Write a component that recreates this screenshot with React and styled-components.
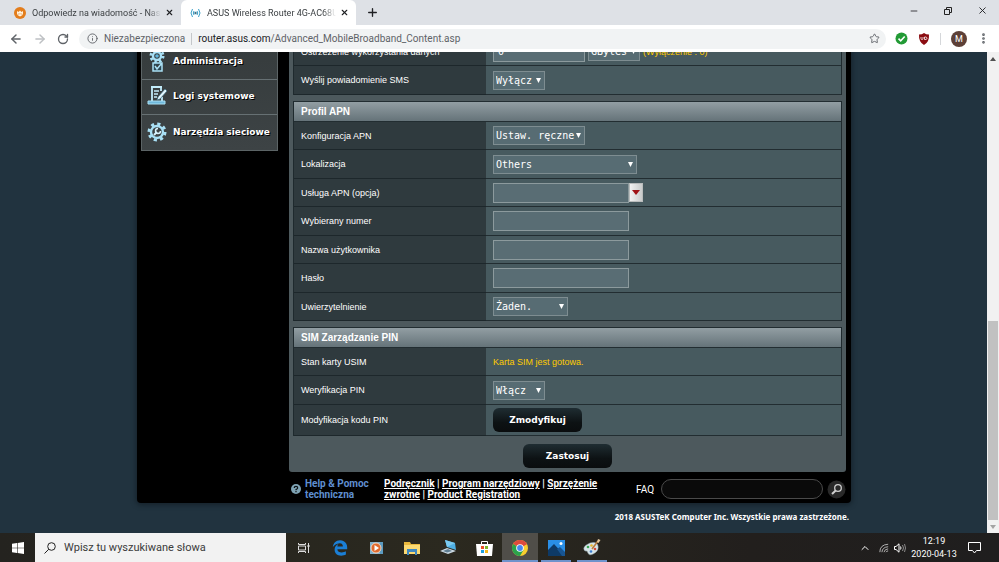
import React from "react";
import styled, { createGlobalStyle } from "styled-components";
import {
  ArrowLeft,
  ArrowRight,
  RotateCw,
  Info,
  Star,
  X,
  Plus,
  Minus,
  ChevronUp,
  EllipsisVertical
} from "lucide-react";
import { FaEdgeLegacy } from "react-icons/fa";

const uiFont = `Roboto, "Noto Sans", sans-serif`;
const pageFont = `"Liberation Sans", Arial, sans-serif`;
const boldFont = `"DejaVu Sans", Verdana, sans-serif`;
const monoFont = `"DejaVu Sans Mono", "Liberation Mono", monospace`;

const GlobalStyle = createGlobalStyle`
  * {
    box-sizing: border-box;
  }
  body {
    margin: 0;
    font-family: ${uiFont};
    font-size: 10px;
  }
  button {
    border: 0;
    padding: 0;
    background: none;
    color: inherit;
    font: inherit;
  }
  svg {
    display: block;
    flex-shrink: 0;
  }
`;

const Screen = styled.div`
  display: flex;
  flex-direction: column;
  height: 100vh;
  overflow: hidden;
`;

/* browser chrome */

const TabStrip = styled.div`
  display: flex;
  height: 25px;
  flex-shrink: 0;
  background: #dee1e6;
  color: #3c4043;
`;

const Tab = styled.div`
  display: flex;
  align-items: center;
  width: ${props => (props.$active ? "175px" : "181px")};
  padding: 0 6px 0 ${props => (props.$active ? "9px" : "14px")};
  border-radius: 6px 6px 0 0;
  background: ${props => (props.$active ? "#fff" : "transparent")};
`;

const TabTitle = styled.span`
  flex: 1;
  margin: 0 2px 0 6px;
  overflow: hidden;
  white-space: nowrap;
  font-size: 9px;
  line-height: 12px;
  mask-image: linear-gradient(90deg, #000 90%, transparent);
`;

const IconButton = styled.button`
  display: flex;
  align-items: center;
  justify-content: center;
  width: ${props => props.$width || "12px"};
  color: ${props => props.$color || "#202124"};
`;

const WindowControls = styled.div`
  display: flex;
  margin-left: auto;
  height: 21px;
`;

const Toolbar = styled.div`
  display: flex;
  align-items: center;
  height: 27px;
  flex-shrink: 0;
  padding: 0 10px 0 4px;
  background: #fff;
`;

const AddressBar = styled.div`
  display: flex;
  align-items: center;
  flex: 1;
  height: 20px;
  margin: 0 9px 0 4px;
  padding: 0 6px 0 8px;
  border-radius: 10px;
  background: #f1f3f4;
  color: #5f6368;
`;

const Security = styled.span`
  margin: 0 6px;
  padding-right: 6px;
  border-right: 1px solid #c4c7ca;
  line-height: 12px;
`;

const Url = styled.span`
  flex: 1;
  line-height: 12px;
  white-space: nowrap;
`;

const Host = styled.span`
  color: #202124;
`;

const Extensions = styled.div`
  display: flex;
  align-items: center;
  gap: 10px;
`;

const Separator = styled.span`
  width: 1px;
  height: 12px;
  background: #d5d7da;
`;

const Avatar = styled.button`
  width: 16px;
  height: 16px;
  border-radius: 50%;
  background: #5d4037;
  color: #fff;
  font-size: 9px;
  line-height: 16px;
`;

/* router page */

const Viewport = styled.div`
  display: flex;
  flex: 1;
  min-height: 0;
`;

const Page = styled.div`
  display: flex;
  flex: 1;
  flex-direction: column;
  align-items: center;
  justify-content: flex-end;
  padding-left: 1px;
  overflow: hidden;
  background: #21333f;
  color: #fff;
  font-family: ${pageFont};
  font-size: 9px;
`;

const Shell = styled.div`
  display: grid;
  grid-template-columns: 137px minmax(0, 1fr);
  align-content: end;
  column-gap: 11px;
  flex: 1 0 auto;
  width: 714px;
  padding: 0 5px 0 4px;
  border-radius: 0 0 4px 4px;
  background: #000;
  box-shadow: 0 1px 5px 1px #15222b;
`;

const Menu = styled.nav`
  align-self: start;
  margin-top: 7px;
  border: 1px solid #5c6466;
  border-top: 0;
  background: linear-gradient(#363c3d, #3d4345);
`;

const MenuLink = styled.a`
  display: flex;
  align-items: center;
  gap: 5px;
  height: 35px;
  padding: 0 0 2px 4px;
  border-bottom: 1px solid #667073;
  color: #fff;
  font: bold 9px/12px ${boldFont};
  text-decoration: none;
  text-shadow: 1px 1px 0 #000;

  &:last-child {
    border-bottom: 0;
  }
`;

const Panel = styled.main`
  display: flex;
  flex-direction: column;
  gap: 6px;
  padding: 0 4px 4px;
  border-radius: 0 0 3px 3px;
  background: #4d595d;
`;

const Table = styled.table`
  width: 100%;
  table-layout: fixed;
  border: 0 solid #1f2a2e;
  border-width: 0 1px;
  border-spacing: 0;
`;

const Title = styled.th`
  height: 21px;
  padding: 0 7px;
  border: 1px solid #222d31;
  border-width: 1px 0;
  background: linear-gradient(#929ea3, #657379);
  font: bold 10px/12px ${pageFont};
  text-align: left;
`;

const Row = styled.tr`
  height: ${props => (props.$tall ? "31px" : "28px")};

  &:nth-child(even) {
    height: 29px;
  }
`;

const LabelCell = styled.th`
  padding: 0 7px;
  border-bottom: 1px solid #1d272b;
  background: #2f3a3e;
  font-weight: normal;
  text-align: left;
`;

const ValueCell = styled.td`
  padding: 0 7px;
  border-bottom: 1px solid #222d31;
  background: #475a5f;
`;

const Controls = styled.div`
  display: flex;
  align-items: center;
  gap: ${props => props.$gap || "0"};
`;

const Input = styled.input`
  width: ${props => props.$width || "136px"};
  height: 20px;
  padding: 0 4px;
  border: 1px solid #8c9a9d;
  border-radius: 0;
  background: #596d74;
  color: #fff;
  font: 10px ${monoFont};
  outline: none;
`;

const arrow = `url("data:image/svg+xml,%3Csvg xmlns='http://www.w3.org/2000/svg' width='5' height='5'%3E%3Cpath d='M0 0h5L2.5 5z' fill='white'/%3E%3C/svg%3E")`;

const Select = styled.select`
  display: block;
  appearance: none;
  width: ${props => props.$width};
  height: 19px;
  padding: 0 0 0 2px;
  border: 1px solid #7e8d91;
  border-radius: 0;
  background: #576c73 ${arrow} no-repeat right 3px center;
  color: #fff;
  font: 10px/17px ${monoFont};
`;

const DropButton = styled.button`
  display: flex;
  align-items: center;
  justify-content: center;
  width: 14px;
  height: 19px;
  border: 1px solid #b9bcbc;
  background: linear-gradient(90deg, #f2f2f2, #c9cbcb);
`;

const Hint = styled.span`
  color: #fc0;
`;

const DarkButton = styled.button`
  display: block;
  align-self: center;
  width: 89px;
  height: 24px;
  margin-top: ${props => (props.$apart ? "2px" : "0")};
  border-radius: 6px;
  background: linear-gradient(#1f2d32, #0d1214 60%, #0a0d0e);
  font: bold 9px/24px ${boldFont};
`;

const Footer = styled.footer`
  display: flex;
  grid-column: 2;
  align-items: center;
  height: 31px;
  padding: 3px 0 0 2px;
  font: bold 10px/11px ${uiFont};
`;

const Help = styled.div`
  width: 83px;
  padding-left: 4px;
  color: #5f8fd0;
`;

const Links = styled.div`
  width: 228px;

  a {
    color: #fff;
  }
`;

const Search = styled.form`
  display: flex;
  align-items: center;
  flex: 1;
  min-width: 0;
  margin-left: 24px;
  font-weight: normal;
`;

const SearchInput = styled.input`
  flex: 1;
  min-width: 0;
  height: 20px;
  margin: 0 4px 0 7px;
  border: 1px solid #4a4a4a;
  border-radius: 10px;
  background: #0a0a0a;
  color: #fff;
`;

const Copyright = styled.div`
  flex-shrink: 0;
  width: 710px;
  height: 30px;
  font: bold 8px/28px "Noto Sans", sans-serif;
  text-align: right;
`;

const ScrollBar = styled.div`
  display: flex;
  flex-direction: column;
  align-items: center;
  width: 12px;
  background: #f1f1f1;
`;

const ScrollTrack = styled.div`
  flex: 257;
`;

const ScrollThumb = styled.div`
  flex: 199;
  width: 10px;
  background: #c1c1c1;
`;

const ScrollArrow = styled.button`
  display: flex;
  align-items: center;
  justify-content: center;
  height: 13px;
`;

/* taskbar */

const Taskbar = styled.div`
  display: flex;
  height: 29px;
  flex-shrink: 0;
  background: linear-gradient(90deg, #24231f, #2b291f 45%, #221f1d 75%, #1f1e1e);
  color: #fff;
`;

const TaskSearch = styled.label`
  display: flex;
  align-items: center;
  gap: 8px;
  width: 251px;
  padding-left: 9px;
  background: #f2f2f2;

  input {
    flex: 1;
    min-width: 0;
    padding: 0;
    border: 0;
    background: none;
    font: 11px ${uiFont};
  }
  input::placeholder {
    color: #3b3b3b;
  }
`;

const TaskButton = styled.button`
  display: flex;
  align-items: center;
  justify-content: center;
  width: ${props => props.$width || "36px"};
  background-color: ${props => (props.$active ? "#504e49" : "transparent")};
  background-image: ${props =>
    props.$open ? "linear-gradient(#6f93cc, #6f93cc)" : "none"};
  background-repeat: no-repeat;
  background-position: bottom;
  background-size: ${props => (props.$active ? "36px 2px" : "30px 2px")};
`;

const Tray = styled.div`
  display: flex;
  align-items: center;
  margin-left: auto;
  padding-right: 18px;
`;

const Clock = styled.div`
  width: 46px;
  margin: 0 10px 0 3px;
  font: 9px/13px ${uiFont};
  text-align: center;
  white-space: nowrap;
`;

const GearShape = ({ cx = 10, cy = 10, r = 8 }) => {
  const tooth = (2 * Math.PI * r) / 16;
  return (
    <g fill="none" stroke="#a9e0f5">
      <circle cx={cx} cy={cy} r={r} strokeWidth="3" strokeDasharray={tooth} />
      <circle cx={cx} cy={cy} r={r - 2} strokeWidth="2.4" />
    </g>
  );
};

const AdminIcon = () => (
  <svg width="22" height="22" viewBox="0 0 22 22">
    <GearShape cx={11} cy={6} r={6} />
    <circle cx="11" cy="6" r="1.8" fill="#62b6dc" />
    <path
      d="M7 13h9v8H7zM9 16l2 3 5-6"
      fill="#2c4854"
      stroke="#a9e0f5"
      strokeWidth="1.5"
    />
  </svg>
);

const LogIcon = () => (
  <svg width="22" height="22" viewBox="0 0 22 22">
    <path
      d="M5 2h11M6 2v14M15 3v3M16 12v4"
      fill="none"
      stroke="#c3ecfa"
      strokeWidth="1.8"
    />
    <path d="M8 6h5M8 9h4M8 12h3" stroke="#c3ecfa" strokeWidth="1.3" />
    <path d="M19 4l-7 8-1 3 3-1 7-8z" fill="#e2f7ff" stroke="#3c6a7d" strokeWidth=".7" />
    <path d="M2 16h17v3H2z" fill="#70b9dc" stroke="#a9e0f5" />
  </svg>
);

const ToolsIcon = () => (
  <svg width="22" height="22" viewBox="0 0 22 22">
    <GearShape cx={11} cy={11} r={8} />
    <path d="M8 14l3-3" stroke="#d8f3fd" strokeWidth="2" />
    <path
      d="M12 7.500a2.500 2.500 0 1 0 2.500 2.500"
      fill="none"
      stroke="#d8f3fd"
      strokeWidth="1.500"
    />
  </svg>
);

const ForumIcon = () => (
  <svg width="12" height="12" viewBox="0 0 12 12">
    <circle cx="6" cy="6" r="6" fill="#e37d1c" />
    <path
      d="M3 4v2.500q0 2 3 3 3-1 3-3V4L7.500 5 6 3.500 4.500 5z"
      fill="#fff3df"
    />
    <path d="M4.500 6.500v1M6 6v1.500M7.500 6.500v1" stroke="#e37d1c" strokeWidth=".6" />
  </svg>
);

const SignalIcon = () => (
  <svg width="11" height="10" viewBox="0 0 11 10" fill="none" stroke="#39a0c8">
    <path d="M2.500 1Q-.5 5 2.500 9M4 3Q2.500 5 4 7M7 3q1.500 2 0 4M8.500 1q3 4 0 8" />
    <circle cx="5.500" cy="5" r="1.200" fill="#3d7187" stroke="none" />
  </svg>
);

const RestoreIcon = () => (
  <svg width="8" height="8" viewBox="0 0 8 8" fill="none" stroke="#222">
    <path d="M.5 2.500h5v5h-5zM2.500 2V.5h5v5H6" />
  </svg>
);

const CheckBadge = () => (
  <svg width="13" height="13" viewBox="0 0 13 13">
    <circle cx="6.500" cy="6.500" r="6" fill="#229a35" />
    <path d="M3.500 6.700l2.200 2.100 4-4.300" fill="none" stroke="#fff" strokeWidth="1.600" />
  </svg>
);

const ShieldBadge = () => (
  <svg width="12" height="12" viewBox="0 0 12 12">
    <path d="M6 0q2 1.500 5 1.500Q11.500 9 6 12 .5 9 1 1.500 4 1.500 6 0z" fill="#8b0d12" />
    <path
      d="M3 4v1.500q0 1 1 1t1-1V4M6.500 4v2.500H8q1-.3 1-1.200T8 4z"
      fill="none"
      stroke="#fff"
      strokeWidth=".8"
    />
  </svg>
);

const HelpIcon = () => (
  <svg width="10" height="10" viewBox="0 0 10 10">
    <circle cx="5" cy="5" r="5" fill="#7fa3b4" />
    <path
      d="M3.300 4Q3.300 2.300 5 2.300T6.700 4Q6.700 4.700 5 5.600v.6M5 7v1.200"
      fill="none"
      stroke="#0c1317"
      strokeWidth="1.200"
    />
  </svg>
);

const FindIcon = () => (
  <svg width="19" height="19" viewBox="0 0 19 19">
    <circle cx="9.500" cy="9.500" r="9" fill="#292929" />
    <circle cx="11" cy="8" r="3.300" fill="none" stroke="#d0d0d0" strokeWidth="1.300" />
    <path d="M8.700 10.500L5 14" stroke="#d0d0d0" strokeWidth="2" />
  </svg>
);

const WindowsIcon = () => (
  <svg width="12" height="12" viewBox="0 0 12 12" fill="#fff">
    <path d="M0 1.700l5-.7v4.700H0zM5.600.9L12 0v5.700H5.600zM0 6.300h5V11l-5-.7zM5.600 6.300H12V12l-6.400-.9z" />
  </svg>
);

const LensIcon = () => (
  <svg width="12" height="12" viewBox="0 0 12 12" fill="none" stroke="#222">
    <circle cx="7.500" cy="4.500" r="3.800" />
    <path d="M4.800 7.200L.5 11.500" />
  </svg>
);

const TaskViewIcon = () => (
  <svg width="12" height="12" viewBox="0 0 12 12" fill="none" stroke="#ddd">
    <path d="M.5 1v1.500h7V1M.5 11V9.500h7V11M.5 4h7v4h-7zM10.500 1v10" />
    <path d="M9.500 4h2" strokeWidth="2" />
  </svg>
);

const MediaIcon = () => (
  <svg width="15" height="14" viewBox="0 0 15 14">
    <path d="M1 1h13v12H1z" fill="#83b4cf" />
    <path d="M11 1h3v12h-3z" fill="#5c9bc0" />
    <circle cx="7" cy="7" r="5" fill="#e06a2d" stroke="#f4d3bd" />
    <path d="M5.500 4l4.500 3-4.500 3z" fill="#fff" />
  </svg>
);

const FolderIcon = () => (
  <svg width="16" height="14" viewBox="0 0 16 14">
    <path d="M0 1h6l1 2h9v10H0z" fill="#e9b83e" />
    <path d="M0 4h16v9H0z" fill="#fbda73" />
    <path d="M3 8h10v6h-2v-3H5v3H3z" fill="#3f88c0" />
  </svg>
);

const LaptopIcon = () => (
  <svg width="17" height="15" viewBox="0 0 17 15">
    <path d="M5 0l10 3 1 7-9-3z" fill="#4fb0e4" />
    <path d="M5 0l10 3-8 4z" fill="#7bcaf0" />
    <path d="M0 11l7-3 9 3-8 3z" fill="#cbd9e2" />
    <path d="M3 11l5-2 4 2-5 1.500z" fill="#5f7e92" />
  </svg>
);

const StoreIcon = () => (
  <svg width="17" height="16" viewBox="0 0 17 16">
    <path d="M5.500 5V1.500h6V5" fill="none" stroke="#fff" />
    <path d="M0 4h17l-1 12H1z" fill="#fff" />
    <path d="M5 6h3v3H5z" fill="#e8502a" />
    <path d="M9 6h3v3H9z" fill="#7eb72a" />
    <path d="M5 10h3v3H5z" fill="#1d9fe0" />
    <path d="M9 10h3v3H9z" fill="#f5b619" />
  </svg>
);

const ChromeIcon = () => (
  <svg width="16" height="16" viewBox="0 0 16 16">
    <circle cx="8" cy="8" r="8" fill="#f9cf2f" />
    <path d="M8 8L1.070 4A8 8 0 0 1 14.930 4z" fill="#dd4b3e" />
    <path d="M8 8L1.070 4A8 8 0 0 0 8 16l3.500-6z" fill="#2ba24c" />
    <path d="M8 4h6.930L8 8z" fill="#dd4b3e" />
    <circle cx="8" cy="8" r="3.800" fill="#fff" />
    <circle cx="8" cy="8" r="2.900" fill="#4688f1" />
  </svg>
);

const PhotosIcon = () => (
  <svg width="17" height="16" viewBox="0 0 17 16">
    <path d="M0 0h17v16H0z" fill="#2a8fe6" />
    <path d="M0 10l6-6 11 12H0z" fill="#0e3a66" />
    <path d="M9 9l3-2 5 5v4h-3z" fill="#185592" />
    <circle cx="13" cy="3.500" r="1.500" fill="#fff" />
  </svg>
);

const PaintIcon = () => (
  <svg width="18" height="17" viewBox="0 0 18 17">
    <path
      d="M7 4q7-2 8 3t-5 8q-4 2-5-1t-3-2Q-2 8 7 4z"
      fill="#d7e4e8"
      stroke="#9fb3bb"
      strokeWidth=".5"
    />
    <circle cx="5" cy="8" r="1.300" fill="#3aa655" />
    <circle cx="8.500" cy="6.500" r="1.300" fill="#e8b62b" />
    <circle cx="8" cy="12.500" r="1.300" fill="#3b7dd0" />
    <circle cx="12" cy="10" r="1.300" fill="#d8493a" />
    <path d="M9 10l6-8" stroke="#b77b3d" strokeWidth="1.500" />
    <path d="M14 3l1-3 2.500 1-2 3z" fill="#e5c9a0" />
  </svg>
);

const WifiIcon = () => (
  <svg width="10" height="10" viewBox="0 0 12 12" fill="none" stroke="#ccc">
    <path d="M1 11Q1 2 11 1.500M3.500 11Q4 5 11 4.500M6 11q.5-3.500 5-4M8.500 11q.5-1.500 2.500-1.500" />
  </svg>
);

const SpeakerIcon = () => (
  <svg width="12" height="10" viewBox="0 0 12 10" fill="none" stroke="#fff">
    <path d="M.5 3.500H2L5 .8v8.400L2 6.500H.5zM6.500 3.500q1 1.500 0 3" />
    <path d="M8.500 2q2 3 0 6M10.500 1q2 4 0 8" stroke="#8b8b8b" />
  </svg>
);

const NoticeIcon = () => (
  <svg width="13" height="13" viewBox="0 0 13 13" fill="none" stroke="#fff">
    <path d="M.5 1.500h12v8H8.500L6.500 12 4.500 9.500h-4z" />
  </svg>
);

const Triangle = ({ up, color = "#505050" }) => (
  <svg width="6" height="4" viewBox="0 0 6 4" fill={color}>
    <path d={up ? "M0 4L3 0l3 4z" : "M0 0l3 4 3-4z"} />
  </svg>
);

const menuItems = [
  { text: "Administracja", Icon: AdminIcon },
  { text: "Logi systemowe", Icon: LogIcon },
  { text: "Narzędzia sieciowe", Icon: ToolsIcon }
];

const tasks = [
  { name: "Widok zadań", Icon: TaskViewIcon },
  { name: "Microsoft Edge", Icon: () => <FaEdgeLegacy size={16} color="#1b7fd6" /> },
  { name: "Odtwarzacz", Icon: MediaIcon },
  { name: "Eksplorator plików", Icon: FolderIcon },
  { name: "Połączenie", Icon: LaptopIcon },
  { name: "Microsoft Store", Icon: StoreIcon },
  { name: "Google Chrome", Icon: ChromeIcon, active: true, open: true },
  { name: "Zdjęcia", Icon: PhotosIcon, open: true },
  { name: "Paint", Icon: PaintIcon, open: true }
];

const LabelColumn = styled.col`
  width: 192px;
`;

const Field = ({ id, label, tall, children }) => (
  <Row $tall={tall}>
    <LabelCell scope="row">
      <label htmlFor={id}>{label}</label>
    </LabelCell>
    <ValueCell>{children}</ValueCell>
  </Row>
);

const SelectField = ({ id, label, value, width }) => (
  <Field id={id} label={label}>
    <Select id={id} $width={width}>
      <option>{value}</option>
    </Select>
  </Field>
);

const InputField = ({ id, label, type = "text" }) => (
  <Field id={id} label={label}>
    <Controls>
      <Input id={id} type={type} />
    </Controls>
  </Field>
);

const Section = ({ title, children }) => (
  <Table>
    <colgroup>
      <LabelColumn />
      <col />
    </colgroup>
    {title && (
      <thead>
        <tr>
          <Title colSpan={2}>{title}</Title>
        </tr>
      </thead>
    )}
    <tbody>{children}</tbody>
  </Table>
);

const Browser = () => (
  <>
    <TabStrip>
      <Tab>
        <ForumIcon />
        <TabTitle>Odpowiedz na wiadomość - Nasz</TabTitle>
        <IconButton aria-label="Zamknij kartę">
          <X size={9} strokeWidth={3} />
        </IconButton>
      </Tab>
      <Tab $active>
        <SignalIcon />
        <TabTitle>ASUS Wireless Router 4G-AC68U</TabTitle>
        <IconButton aria-label="Zamknij kartę">
          <X size={9} strokeWidth={3} />
        </IconButton>
      </Tab>
      <IconButton $width="32px" aria-label="Nowa karta">
        <Plus size={13} strokeWidth={2.5} />
      </IconButton>
      <WindowControls>
        <IconButton $width="34px" aria-label="Minimalizuj">
          <Minus size={10} />
        </IconButton>
        <IconButton $width="34px" aria-label="Przywróć">
          <RestoreIcon />
        </IconButton>
        <IconButton $width="34px" aria-label="Zamknij">
          <X size={11} strokeWidth={2} />
        </IconButton>
      </WindowControls>
    </TabStrip>
    <Toolbar>
      <IconButton $width="24px" $color="#5f6368" aria-label="Wstecz">
        <ArrowLeft size={14} strokeWidth={2.5} />
      </IconButton>
      <IconButton $width="23px" $color="#bdc0c3" aria-label="Dalej">
        <ArrowRight size={14} strokeWidth={2.5} />
      </IconButton>
      <IconButton $width="24px" $color="#5f6368" aria-label="Odśwież">
        <RotateCw size={12} strokeWidth={2.7} />
      </IconButton>
      <AddressBar>
        <Info size={11} />
        <Security>Niezabezpieczona</Security>
        <Url>
          <Host>router.asus.com</Host>/Advanced_MobileBroadband_Content.asp
        </Url>
        <IconButton $color="#5f6368" aria-label="Dodaj do zakładek">
          <Star size={11} />
        </IconButton>
      </AddressBar>
      <Extensions>
        <CheckBadge />
        <ShieldBadge />
        <Separator />
        <Avatar>M</Avatar>
        <IconButton $color="#5f6368" aria-label="Menu">
          <EllipsisVertical size={13} strokeWidth={3} />
        </IconButton>
      </Extensions>
    </Toolbar>
  </>
);

const Settings = () => (
  <Panel>
    <Section>
      <Field id="alert" label="Ostrzeżenie wykorzystania danych">
        <Controls $gap="3px">
          <Input id="alert" $width="92px" defaultValue="0" />
          <Select $width="52px" aria-label="Jednostka">
            <option>GBytes</option>
          </Select>
          <Hint>(Wyłączenie : 0)</Hint>
        </Controls>
      </Field>
      <SelectField id="sms" label="Wyślij powiadomienie SMS" value="Wyłącz" width="52px" />
    </Section>
    <Section title="Profil APN">
      <SelectField id="config" label="Konfiguracja APN" value="Ustaw. ręczne" width="92px" />
      <SelectField id="location" label="Lokalizacja" value="Others" width="144px" />
      <Field id="service" label="Usługa APN (opcja)">
        <Controls>
          <Input id="service" />
          <DropButton aria-label="Pokaż listę">
            <svg width="8" height="5" viewBox="0 0 8 5">
              <path d="M0 0h8L4 5z" fill="#a01216" />
            </svg>
          </DropButton>
        </Controls>
      </Field>
      <InputField id="number" label="Wybierany numer" />
      <InputField id="user" label="Nazwa użytkownika" />
      <InputField id="password" label="Hasło" type="password" />
      <SelectField id="auth" label="Uwierzytelnienie" value="Żaden." width="75px" />
    </Section>
    <Section title="SIM Zarządzanie PIN">
      <Row>
        <LabelCell scope="row">Stan karty USIM</LabelCell>
        <ValueCell>
          <Hint>Karta SIM jest gotowa.</Hint>
        </ValueCell>
      </Row>
      <SelectField id="pin" label="Weryfikacja PIN" value="Włącz" width="52px" />
      <Field id="modify" label="Modyfikacja kodu PIN" tall>
        <DarkButton id="modify">Zmodyfikuj</DarkButton>
      </Field>
    </Section>
    <DarkButton $apart>Zastosuj</DarkButton>
  </Panel>
);

const RouterPage = () => (
  <Page>
    <Shell>
      <Menu>
        {menuItems.map(({ text, Icon }) => (
          <MenuLink href="#" key={text}>
            <Icon />
            {text}
          </MenuLink>
        ))}
      </Menu>
      <Settings />
      <Footer>
        <HelpIcon />
        <Help>Help & Pomoc techniczna</Help>
        <Links>
          <a href="#">Podręcznik</a> | <a href="#">Program narzędziowy</a> |{" "}
          <a href="#">Sprzężenie zwrotne</a> | <a href="#">Product Registration</a>
        </Links>
        <Search>
          <label htmlFor="faq">FAQ</label>
          <SearchInput id="faq" />
          <IconButton type="button" $width="19px" aria-label="Szukaj">
            <FindIcon />
          </IconButton>
        </Search>
      </Footer>
    </Shell>
    <Copyright>2018 ASUSTeK Computer Inc. Wszystkie prawa zastrzeżone.</Copyright>
  </Page>
);

const App = () => (
  <Screen>
    <GlobalStyle />
    <Browser />
    <Viewport>
      <RouterPage />
      <ScrollBar>
        <ScrollArrow aria-label="W górę">
          <Triangle up />
        </ScrollArrow>
        <ScrollTrack />
        <ScrollThumb />
        <ScrollArrow aria-label="W dół">
          <Triangle color="#a3a3a3" />
        </ScrollArrow>
      </ScrollBar>
    </Viewport>
    <Taskbar>
      <TaskButton $width="35px" aria-label="Start">
        <WindowsIcon />
      </TaskButton>
      <TaskSearch>
        <LensIcon />
        <input placeholder="Wpisz tu wyszukiwane słowa" />
      </TaskSearch>
      {tasks.map(({ name, Icon, active, open }) => (
        <TaskButton key={name} aria-label={name} $active={active} $open={open}>
          <Icon />
        </TaskButton>
      ))}
      <Tray>
        <TaskButton $width="22px" aria-label="Ukryte ikony">
          <ChevronUp size={12} />
        </TaskButton>
        <TaskButton $width="16px" aria-label="Sieć">
          <WifiIcon />
        </TaskButton>
        <TaskButton $width="16px" aria-label="Głośność">
          <SpeakerIcon />
        </TaskButton>
        <Clock>
          12:19
          <br />
          2020-04-13
        </Clock>
        <TaskButton $width="14px" aria-label="Powiadomienia">
          <NoticeIcon />
        </TaskButton>
      </Tray>
    </Taskbar>
  </Screen>
);

export default App;
